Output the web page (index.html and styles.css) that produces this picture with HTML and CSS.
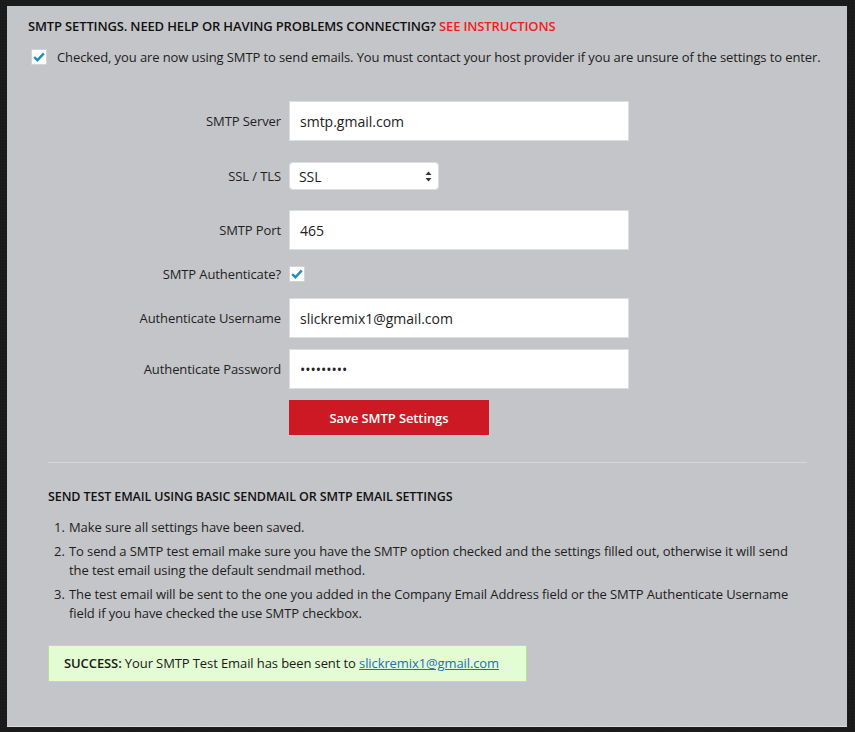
FILE: index.html
```html
<!DOCTYPE html>
<html lang="en">
<head>
    <meta charset="UTF-8">
    <meta name="viewport" content="width=device-width, initial-scale=1.0">
    <title>SMTP Settings</title>

    <link rel="stylesheet" href="styles.css">
</head>

<body>
    <div class="panel">
        <div class="panel-title">SMTP Settings. Need help or having problems connecting? <a href="#" class="see-link">See Instructions</a></div>

        <div class="use-smtp">
            <span class="check-box">
                <svg width="12" height="10" viewBox="0 0 12 10"><path d="M1.2 5.2 L4.4 8.2 L10.8 1.4" fill="none" stroke="#1e8cbe" stroke-width="2.4" stroke-linejoin="miter"/></svg>
            </span>
            <span>Checked, you are now using SMTP to send emails. You must contact your host provider if you are unsure of the settings to enter.</span>
        </div>

        <div class="smtp-form">
            <div class="form-row row-server">
                <label class="form-label">SMTP Server</label>
                <input type="text" class="text-input" value="smtp.gmail.com">
            </div>
            <div class="form-row row-ssl">
                <label class="form-label">SSL / TLS</label>
                <div class="select-box">
                    <span>SSL</span>
                    <svg class="select-arrows" width="7" height="11" viewBox="0 0 7 11"><path d="M3.5 0.5 L6.5 4 L0.5 4 Z M0.5 7 L6.5 7 L3.5 10.5 Z" fill="#333"/></svg>
                </div>
            </div>
            <div class="form-row row-port">
                <label class="form-label">SMTP Port</label>
                <input type="text" class="text-input" value="465">
            </div>
            <div class="form-row row-auth">
                <label class="form-label">SMTP Authenticate?</label>
                <span class="check-box">
                    <svg width="12" height="10" viewBox="0 0 12 10"><path d="M1.2 5.2 L4.4 8.2 L10.8 1.4" fill="none" stroke="#1e8cbe" stroke-width="2.4"/></svg>
                </span>
            </div>
            <div class="form-row row-user">
                <label class="form-label">Authenticate Username</label>
                <input type="text" class="text-input" value="slickremix1@gmail.com">
            </div>
            <div class="form-row row-pass">
                <label class="form-label">Authenticate Password</label>
                <input type="password" class="text-input" value="123456789">
            </div>
            <div class="form-row row-save">
                <span class="form-label"></span>
                <button class="save-btn">Save SMTP Settings</button>
            </div>
        </div>

        <div class="test-email">
            <div class="test-title">Send test email using basic sendmail or SMTP email settings</div>
            <ol class="test-steps">
                <li>Make sure all settings have been saved.</li>
                <li>To send a SMTP test email make sure you have the SMTP option checked and the settings filled out, otherwise it will send the test email using the default sendmail method.</li>
                <li>The test email will be sent to the one you added in the Company Email Address field or the SMTP Authenticate Username field if you have checked the use SMTP checkbox.</li>
            </ol>
            <div class="success-msg"><strong>SUCCESS:</strong> Your SMTP Test Email has been sent to <a href="#">slickremix1@gmail.com</a></div>
        </div>
    </div>
</body>
</html>
```

FILE: styles.css
```css
* {
    margin: 0;
    padding: 0;
    box-sizing: border-box;
    font-family: "Open Sans", Arial, sans-serif;
}

body {
    background-color: #1a1a1b;
    background-image: radial-gradient(rgba(255, 255, 255, 0.03) 1px, transparent 1px);
    background-size: 3px 3px;
    min-height: 100vh;
    padding: 6px 8px 7px 7px;
    color: #222;
    font-size: 13px;
    letter-spacing: -0.1px;
}

.panel {
    background-color: #c4c5c8;
    border-bottom: 1px solid #dcdcde;
    padding: 10px 20px 44px 21px;
}

.panel-title {
    font-size: 13px;
    font-weight: 600;
    line-height: 20px;
    letter-spacing: -0.15px;
    text-transform: uppercase;
    color: #111;
}

.see-link {
    color: #f41c1c;
    text-decoration: none;
}

.use-smtp {
    display: flex;
    align-items: center;
    margin-top: 11px;
    padding-left: 3px;
    line-height: 20px;
    color: #1d1d1d;
}

.use-smtp .check-box {
    margin-right: 10px;
}

.check-box {
    display: inline-flex;
    align-items: center;
    justify-content: center;
    width: 16px;
    height: 16px;
    background-color: #fff;
    border: 1px solid #d2d3d5;
    flex-shrink: 0;
}

.smtp-form {
    margin-top: 34px;
}

.form-row {
    display: flex;
    align-items: center;
    gap: 8px;
}

.form-label {
    width: 253px;
    text-align: right;
    line-height: 20px;
    color: #1f1f1f;
}

.row-ssl { margin-top: 21px; }
.row-port { margin-top: 20px; }
.row-auth { margin-top: 14px; }
.row-user { margin-top: 14px; }
.row-pass { margin-top: 11px; }
.row-save { margin-top: 11px; }

.text-input {
    width: 340px;
    height: 40px;
    padding: 0 10px;
    border: 1px solid #dcdde0;
    background-color: #fff;
    font-size: 14px;
    letter-spacing: 0;
    color: #222;
    outline: none;
}

.select-box {
    position: relative;
    width: 150px;
    height: 28px;
    display: flex;
    align-items: center;
    padding-left: 9px;
    background-color: #fff;
    border: 1px solid #dcdde0;
    border-radius: 4px;
    font-size: 14px;
    color: #222;
}

.select-arrows {
    position: absolute;
    right: 6px;
    top: 8px;
}

.save-btn {
    width: 200px;
    height: 35px;
    border: none;
    background-color: #cc1923;
    color: #fff;
    font-size: 13px;
    font-weight: 600;
    letter-spacing: -0.1px;
    cursor: pointer;
}

.test-email {
    margin: 27px 20px 0 20px;
    border-top: 1px solid #d6d7d9;
}

.test-title {
    margin-top: 24px;
    font-size: 12.5px;
    font-weight: 600;
    line-height: 20px;
    text-transform: uppercase;
    color: #111;
}

.test-steps {
    margin-top: 11px;
    padding-left: 20px;
    line-height: 19px;
    color: #1d1d1d;
}

.test-steps li {
    margin-bottom: 5px;
    padding-left: 1px;
}

.success-msg {
    width: 479px;
    margin-top: 22px;
    padding: 8px 15px;
    line-height: 19px;
    background-color: #e3fcd3;
    border: 1px solid #ade891;
    color: #1a1a1a;
}

.success-msg strong {
    font-weight: 600;
}

.success-msg a {
    color: #1e6fb4;
}
```
